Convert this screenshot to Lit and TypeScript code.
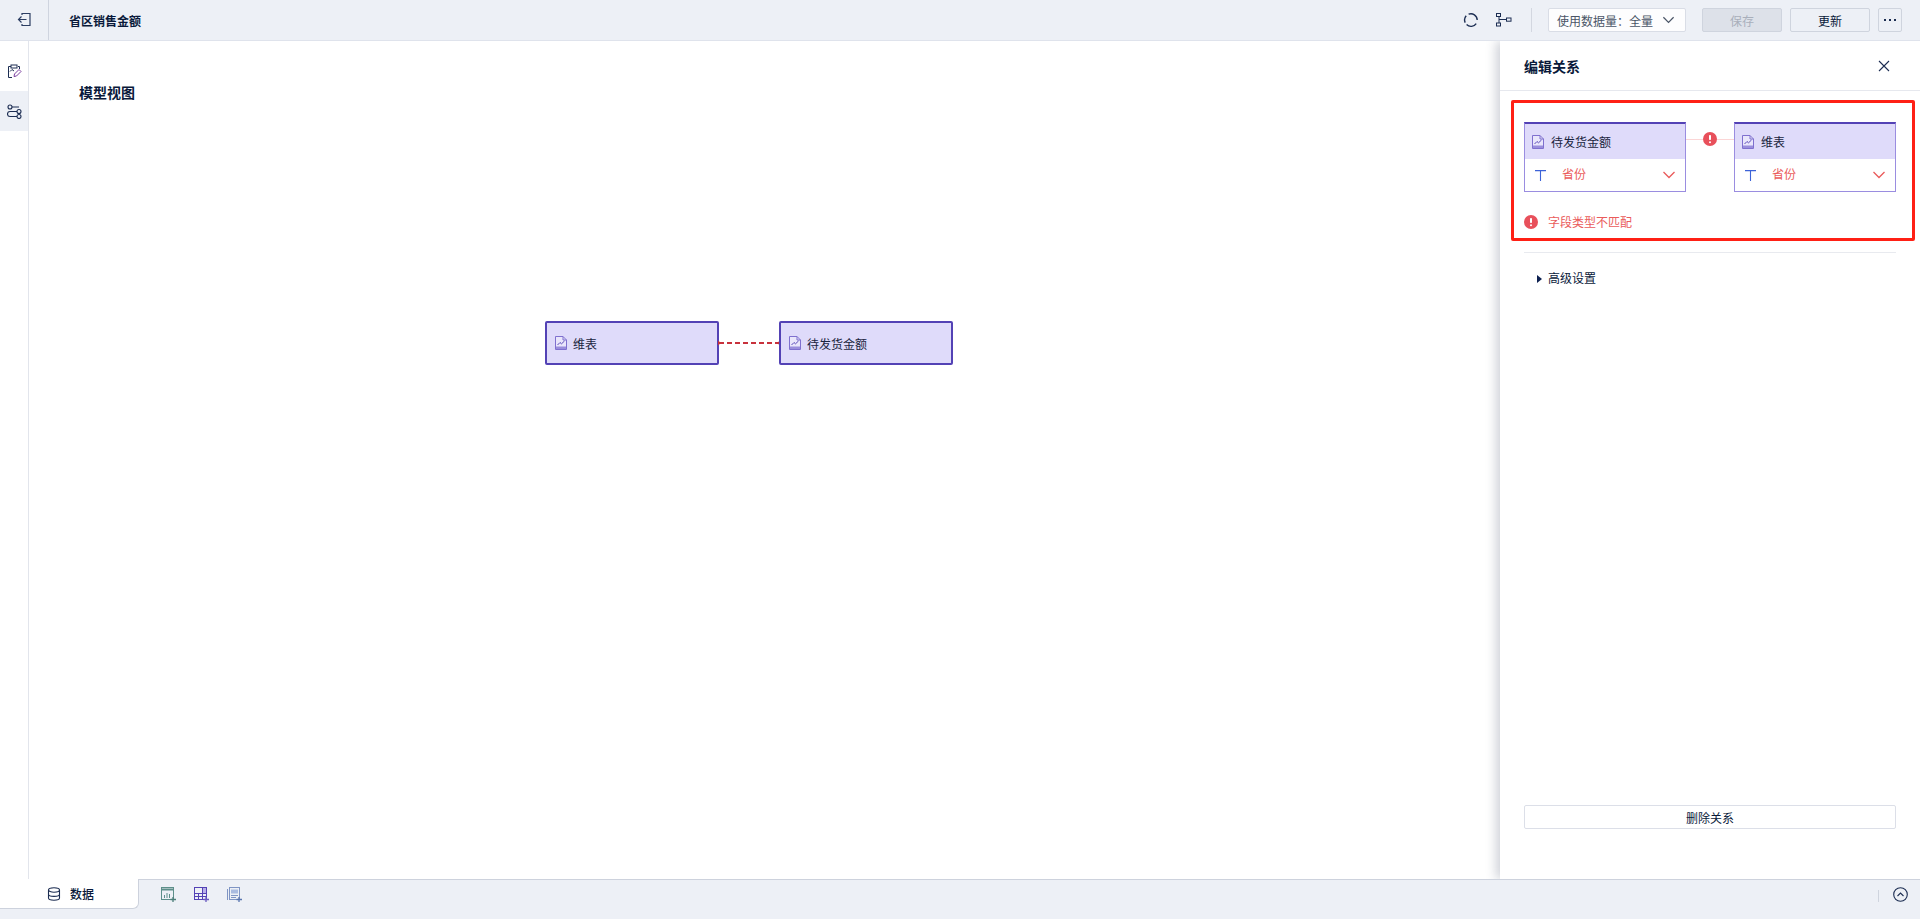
import { LitElement, html, css, svg } from "lit";
import { customElement } from "lit/decorators.js";

const docIcon = svg`<svg class="doc" width="14" height="16" viewBox="0 0 14 16" fill="none">
  <path d="M1.5 1.5H9L12.5 5V14.5H1.5Z" fill="#e9e6fb" stroke="#7f70cf" stroke-width="1"/>
  <path d="M9 1.5V5H12.5" stroke="#7f70cf" stroke-width="1"/>
  <rect x="2" y="11.5" width="10" height="2.5" fill="#9a8edc"/>
  <path d="M3.5 10L6 7.5L7.5 8.8L10.5 6" stroke="#5b4bb8" stroke-width="1"/>
</svg>`;

const chev = (c: string, w = 14) => svg`<svg width="${w}" height="8" viewBox="0 0 14 8" fill="none"><path d="M1.5 1L7 6.5L12.5 1" stroke="${c}" stroke-width="1.3"/></svg>`;

const errIcon = (s: number) => svg`<svg width="${s}" height="${s}" viewBox="0 0 14 14"><circle cx="7" cy="7" r="7" fill="#e8505b"/><rect x="6" y="3" width="2" height="5" rx=".8" fill="#fff"/><rect x="6" y="9.2" width="2" height="2" rx="1" fill="#fff"/></svg>`;

const typeIcon = svg`<svg class="tt" width="11" height="11" viewBox="0 0 11 11" fill="none" stroke="#3d63d8" stroke-width="1.1"><path d="M0 .6H11M5.5 .6V11"/></svg>`;

@customElement("app-root")
export class AppRoot extends LitElement {
  static styles = css`
    :host { display: flex; flex-direction: column; width: 1920px; height: 919px; overflow: hidden; background: #fff;
      font-family: "Noto Sans CJK SC", "Noto Sans", sans-serif; font-size: 12px; color: #09193a; }
    svg { display: block; flex: none; }
    .top { height: 41px; box-sizing: border-box; flex: none; display: flex; align-items: center; background: #edf0f6; border-bottom: 1px solid #dfe3ec; position: relative; z-index: 3; }
    .back { width: 49px; height: 40px; display: flex; align-items: center; justify-content: center; border-right: 1px solid #cfd4df; box-sizing: border-box; }
    .name { margin-left: 20px; font-weight: 700; flex: 1; }
    .ticon { width: 20px; display: flex; justify-content: center; }
    .t1 { margin-right: 13px; }
    .t2 { margin-right: 17px; }
    .vsep { width: 1px; height: 24px; background: #d3d7e0; margin-right: 16px; }
    .select { width: 138px; height: 24px; box-sizing: border-box; border: 1px solid #d9dde6; border-radius: 2px; background: #fdfdfe; display: flex; align-items: center; padding-left: 8px; color: #4a5567; margin-right: 16px; gap: 9px; }
    .btn { width: 80px; height: 24px; box-sizing: border-box; border: 1px solid #cfd4de; border-radius: 2px; display: flex; align-items: center; justify-content: center; margin-right: 8px; }
    .btn.dis { background: #dde1e9; color: #a9afbb; }
    .more { width: 24px; height: 24px; box-sizing: border-box; border: 1px solid #cfd4de; border-radius: 2px; display: flex; align-items: center; justify-content: center; margin-right: 18px; }

    .mid { flex: 1; display: flex; min-height: 0; position: relative; }
    .side { width: 28px; flex: none; border-right: 1px solid #e2e5ec; padding-top: 10px; }
    .side div { height: 40px; display: flex; align-items: center; justify-content: center; }
    .side .on { background: #edf0f6; }
    .canvas { flex: 1; position: relative; min-width: 0; }
    .ctitle { position: absolute; left: 50px; top: 41px; font-size: 14px; font-weight: 700; line-height: 20px; }
    .node { position: absolute; top: 280px; width: 174px; height: 44px; box-sizing: border-box; border: 2px solid #5342b5; border-radius: 2px; background: #dfdbfa; display: flex; align-items: center; padding-left: 7px; gap: 5px; color: #1a2540; }
    .wire { position: absolute; left: 689px; top: 299px; width: 62px; height: 6px; }

    .panel { width: 420px; flex: none; background: #fff; box-shadow: -4px 0 10px rgba(40,50,80,.22); display: flex; flex-direction: column; position: relative; z-index: 2; }
    .phead { height: 50px; flex: none; box-sizing: border-box; border-bottom: 1px solid #e6e8ee; display: flex; align-items: center; justify-content: space-between; padding: 0 30px 0 24px; font-size: 14px; font-weight: 700; }
    .alert { margin: 9px 5px 0 11px; height: 141px; box-sizing: border-box; border: 3px solid #ff2015; border-radius: 2px; padding: 19px 16px 0 10px; flex: none; }
    .cards { display: flex; align-items: flex-start; }
    .card { width: 162px; height: 70px; box-sizing: border-box; border: 1px solid #9a8de0; border-top: 2px solid #5342b5; flex: none; }
    .chead { height: 35px; background: #dfdbfa; display: flex; align-items: center; padding-left: 6px; gap: 6px; color: #1a2540; }
    .cbody { height: 32px; display: flex; align-items: center; color: #ea5b5b; padding: 0 9px 0 10px; }
    .tt { margin-right: 16px; }
    .cbody span.f { flex: 1; margin-top: -3px; }
    .link { flex: 1; display: flex; align-items: center; margin-top: 10px; }
    .link i { flex: 1; height: 1px; background: #fbd6d6; }
    .errmsg { display: flex; align-items: center; gap: 10px; color: #ea5b5b; margin-top: 21px; line-height: 18px; }
    .sep { height: 1px; background: #e8eaef; margin: 11px 24px 0; flex: none; }
    .adv { margin: 16px 0 auto 37px; display: flex; align-items: center; gap: 6px; line-height: 18px; }
    .adv b { width: 0; height: 0; border-left: 5px solid #0d2050; border-top: 4px solid transparent; border-bottom: 4px solid transparent; margin-top: 1px; }
    .del { height: 24px; flex: none; margin: 0 24px 50px; box-sizing: border-box; border: 1px solid #dcdfe8; border-radius: 2px; display: flex; align-items: center; justify-content: center; }

    .bottom { height: 40px; flex: none; background: #edf0f6; border-top: 1px solid #cdd2dd; box-sizing: border-box; display: flex; align-items: flex-start; position: relative; z-index: 3; }
    .tab { width: 139px; height: 30px; margin-top: -1px; background: #fff; border-right: 1px solid #cdd2dd; border-bottom: 1px solid #cdd2dd; border-radius: 0 0 6px 0; display: flex; align-items: center; gap: 9px; font-weight: 500; box-sizing: border-box; padding-left: 47px; }
    .tools { display: flex; gap: 17px; margin: 7px 0 0 22px; flex: 1; }
    .bsep { width: 1px; height: 12px; background: #cfd4de; margin: 10px 14px 0 0; }
    .up { margin: 7px 12px 0 0; }
  `;

  render() {
    return html`
      <div class="top">
        <div class="back"><svg width="16" height="16" viewBox="0 0 16 16" fill="none" stroke="#2c3e63" stroke-width="1.2"><path d="M6 3V1.5H14V13.5H6V12"/><path d="M10.5 7.5H2.5M5.5 4.5L2.5 7.5L5.5 10.5"/></svg></div>
        <div class="name">省区销售金额</div>
        <div class="ticon t1"><svg width="16" height="16" viewBox="0 0 16 16" fill="none" stroke="#1c2d52" stroke-width="1.4"><path d="M5.6 2.2A6.3 6.3 0 0 1 14.2 8"/><path d="M13.2 11.6A6.3 6.3 0 0 1 3.6 12.6"/><path d="M2.2 10.6A6.3 6.3 0 0 1 3.2 3.8"/></svg></div>
        <div class="ticon t2"><svg width="16" height="14" viewBox="0 0 16 14" fill="none" stroke="#1c2d52" stroke-width="1"><rect x=".5" y=".5" width="4" height="3"/><rect x=".5" y="10" width="4" height="3"/><rect x="10.5" y="5" width="4.5" height="3.2"/><path d="M3 3.5V10M3 6.5H10.5"/></svg></div>
        <div class="vsep"></div>
        <div class="select"><span>使用数据量：全量</span>${chev("#4a5567", 13)}</div>
        <div class="btn dis">保存</div>
        <div class="btn">更新</div>
        <div class="more"><svg width="12" height="2" viewBox="0 0 12 2" fill="#1c2d52"><rect x="0" width="2" height="2"/><rect x="5" width="2" height="2"/><rect x="10" width="2" height="2"/></svg></div>
      </div>
      <div class="mid">
        <div class="side">
          <div><svg width="15" height="15" viewBox="0 0 15 15" fill="none" stroke="#1c2d52" stroke-width="1"><path d="M4 2.5H1.5V13.5H5M11 2.5H12.5V5"/><rect x="4" y="1" width="6" height="3"/><path d="M7 12.5L7.5 10L12 5.5L14 7.5L9.5 12Z" stroke="#7b3fa0"/><path d="M3 7.5L5 5.5L7 7"/></svg></div>
          <div class="on"><svg width="15" height="15" viewBox="0 0 15 15" fill="none" stroke="#1c2d52" stroke-width="1.1"><circle cx="3" cy="3" r="2"/><circle cx="12" cy="7.5" r="2"/><circle cx="12" cy="12.5" r="2"/><path d="M5 3H12M10 7.5H3A2.5 2.5 0 0 0 3 12.5H10"/></svg></div>
        </div>
        <div class="canvas">
          <div class="ctitle">模型视图</div>
          <div class="node" style="left:516px">${docIcon}<span>维表</span></div>
          <svg class="wire" viewBox="0 0 62 6"><path d="M1 3H61" stroke="#c8323c" stroke-width="2" stroke-dasharray="5 3"/><path d="M0 .5L3 3L0 5.5ZM62 .5L59 3L62 5.5Z" fill="#c8323c"/></svg>
          <div class="node" style="left:750px">${docIcon}<span>待发货金额</span></div>
        </div>
        <div class="panel">
          <div class="phead"><span>编辑关系</span><svg width="12" height="12" viewBox="0 0 12 12" fill="none" stroke="#1c2d52" stroke-width="1.1"><path d="M1 1L11 11M11 1L1 11"/></svg></div>
          <div class="alert">
            <div class="cards">
              <div class="card"><div class="chead">${docIcon}<span>待发货金额</span></div><div class="cbody">${typeIcon}<span class="f">省份</span>${chev("#ea5b5b")}</div></div>
              <div class="link"><i></i>${errIcon(14)}<i></i></div>
              <div class="card"><div class="chead">${docIcon}<span>维表</span></div><div class="cbody">${typeIcon}<span class="f">省份</span>${chev("#ea5b5b")}</div></div>
            </div>
            <div class="errmsg">${errIcon(14)}<span>字段类型不匹配</span></div>
          </div>
          <div class="sep"></div>
          <div class="adv"><b></b><span>高级设置</span></div>
          <div class="del">删除关系</div>
        </div>
      </div>
      <div class="bottom">
        <div class="tab"><svg width="14" height="14" viewBox="0 0 14 14" fill="none" stroke="#1c2d52" stroke-width="1.1"><ellipse cx="7" cy="3" rx="5.5" ry="2.2"/><path d="M1.5 3V11C1.5 12.2 4 13.2 7 13.2S12.5 12.2 12.5 11V3M1.5 7.2C1.5 8.4 4 9.4 7 9.4S12.5 8.4 12.5 7.2"/></svg><span>数据</span></div>
        <div class="tools">
          <svg width="16" height="16" viewBox="0 0 16 16" fill="none"><rect x=".5" y=".5" width="12" height="12" stroke="#5d8f8a"/><path d="M1 2.5H12" stroke="#5d8f8a" stroke-width="2"/><path d="M3.5 11V8M6 11V6M8.5 11V7" stroke="#5d8f8a"/><path d="M12 10V15M9.5 12.5H15" stroke="#4d7f7a" stroke-width="1.3"/></svg>
          <svg width="16" height="16" viewBox="0 0 16 16" fill="none"><rect x=".5" y=".5" width="12" height="12" stroke="#5342b5"/><path d="M.5 6.5H12.5M.5 9.5H12.5M4.5 6.5V12.5M8.5 .5V12.5" stroke="#5342b5"/><rect x="9" y="1" width="3" height="5" fill="#b7aeea"/><path d="M12 10V15M9.5 12.5H15" stroke="#6a5ac0" stroke-width="1.3"/></svg>
          <svg width="16" height="16" viewBox="0 0 16 16" fill="none"><rect x="2.5" y=".5" width="10" height="12" stroke="#7f95c4"/><path d="M.5 2V13" stroke="#7f95c4"/><rect x="4" y="2.5" width="7" height="4" fill="#a9bbe0"/><path d="M4 8.5H11M4 10.5H9" stroke="#7f95c4"/><path d="M12 10V15M9.5 12.5H15" stroke="#5a76b0" stroke-width="1.3"/></svg>
        </div>
        <div class="bsep"></div>
        <div class="up"><svg width="15" height="15" viewBox="0 0 15 15" fill="none" stroke="#1c2d52" stroke-width="1.1"><circle cx="7.5" cy="7.5" r="6.8"/><path d="M4.5 9L7.5 6L10.5 9"/></svg></div>
      </div>
    `;
  }
}
